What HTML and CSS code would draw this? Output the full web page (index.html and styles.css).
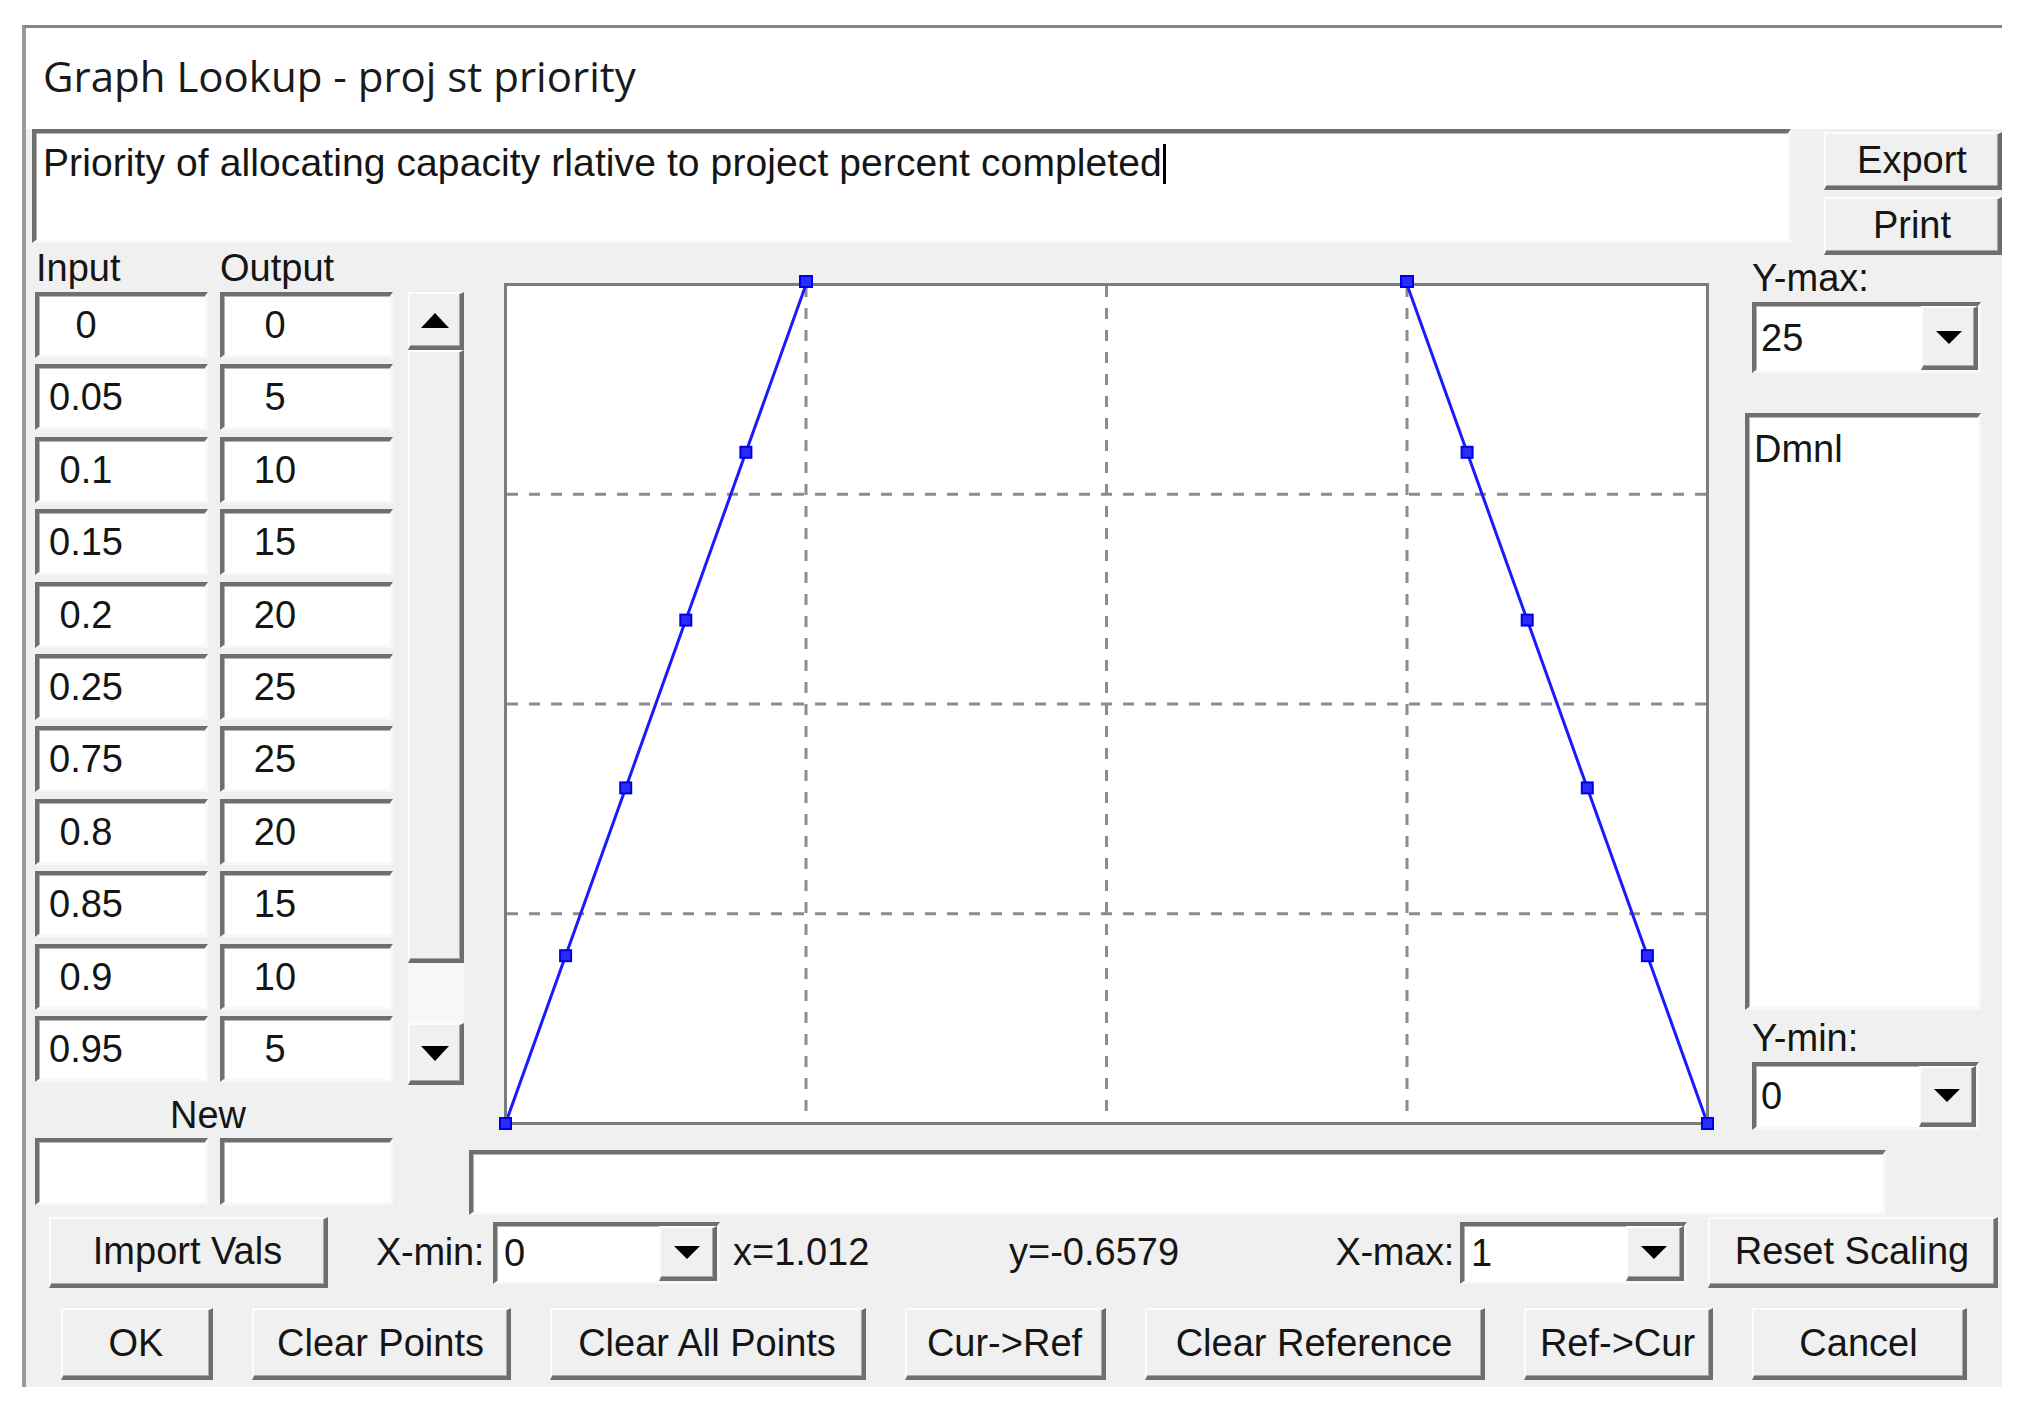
FILE: index.html
```html
<!DOCTYPE html>
<html lang="en">
<head>
    <meta charset="UTF-8">
    <title>Graph Lookup - proj st priority</title>
    <link rel="stylesheet" href="styles.css">
</head>
<body>
<div class="window">
    <div class="titlebar">Graph Lookup - proj st priority</div>
    <div class="client">
        <div class="desc-row">
            <div class="field desc">Priority of allocating capacity rlative to project percent completed<span class="caret"></span></div>
            <div class="side-btns">
                <div class="btn">Export</div>
                <div class="btn">Print</div>
            </div>
        </div>

        <div class="main">
            <div class="table-panel">
                <div class="heads"><span class="head-in">Input</span><span>Output</span></div>
                <div class="table-body">
                    <div class="rows">
                        <div class="row"><div class="field cell in"><span>0</span></div><div class="field cell out"><span>0</span></div></div>
                        <div class="row"><div class="field cell in"><span>0.05</span></div><div class="field cell out"><span>5</span></div></div>
                        <div class="row"><div class="field cell in"><span>0.1</span></div><div class="field cell out"><span>10</span></div></div>
                        <div class="row"><div class="field cell in"><span>0.15</span></div><div class="field cell out"><span>15</span></div></div>
                        <div class="row"><div class="field cell in"><span>0.2</span></div><div class="field cell out"><span>20</span></div></div>
                        <div class="row"><div class="field cell in"><span>0.25</span></div><div class="field cell out"><span>25</span></div></div>
                        <div class="row"><div class="field cell in"><span>0.75</span></div><div class="field cell out"><span>25</span></div></div>
                        <div class="row"><div class="field cell in"><span>0.8</span></div><div class="field cell out"><span>20</span></div></div>
                        <div class="row"><div class="field cell in"><span>0.85</span></div><div class="field cell out"><span>15</span></div></div>
                        <div class="row"><div class="field cell in"><span>0.9</span></div><div class="field cell out"><span>10</span></div></div>
                        <div class="row"><div class="field cell in"><span>0.95</span></div><div class="field cell out"><span>5</span></div></div>
                    </div>
                    <div class="scrollbar">
                        <div class="raised sb-btn up">
                            <svg width="28" height="15" viewBox="0 0 28 15"><polygon class="arrow" points="14,0 28,15 0,15"/></svg>
                        </div>
                        <div class="raised sb-thumb"></div>
                        <div class="sb-track"></div>
                        <div class="raised sb-btn down">
                            <svg width="28" height="15" viewBox="0 0 28 15"><polygon class="arrow" points="0,0 28,0 14,15"/></svg>
                        </div>
                    </div>
                </div>
                <div class="new-label">New</div>
                <div class="row new-row"><div class="field cell in"></div><div class="field cell out"></div></div>
            </div>

            <div class="plot">
                <svg class="graph" width="1205" height="842" viewBox="0 0 1205 842">
                    <line class="grid" x1="302" y1="3" x2="302" y2="839"/>
                    <line class="grid" x1="602.5" y1="3" x2="602.5" y2="839"/>
                    <line class="grid" x1="903" y1="3" x2="903" y2="839"/>
                    <line class="grid" x1="3" y1="211.25" x2="1202" y2="211.25"/>
                    <line class="grid" x1="3" y1="421" x2="1202" y2="421"/>
                    <line class="grid" x1="3" y1="630.75" x2="1202" y2="630.75"/>
                    <polyline class="curve" points="1.5,840.5 61.6,672.7 121.7,504.9 181.8,337.1 241.9,169.3 302,1.5 903,1.5 963.1,169.3 1023.2,337.1 1083.3,504.9 1143.4,672.7 1203.5,840.5"/>
                    <rect class="frame" x="1.5" y="1.5" width="1202" height="839"/>
                    <rect class="pt" x="-4" y="835" width="11" height="11"/>
                    <rect class="pt" x="56.1" y="667.2" width="11" height="11"/>
                    <rect class="pt" x="116.2" y="499.4" width="11" height="11"/>
                    <rect class="pt" x="176.3" y="331.6" width="11" height="11"/>
                    <rect class="pt" x="236.4" y="163.8" width="11" height="11"/>
                    <rect class="pt" x="296" y="-7" width="12" height="11"/>
                    <rect class="pt" x="897" y="-7" width="12" height="11"/>
                    <rect class="pt" x="957.6" y="163.8" width="11" height="11"/>
                    <rect class="pt" x="1017.7" y="331.6" width="11" height="11"/>
                    <rect class="pt" x="1077.8" y="499.4" width="11" height="11"/>
                    <rect class="pt" x="1137.9" y="667.2" width="11" height="11"/>
                    <rect class="pt" x="1198" y="835" width="11" height="11"/>
                </svg>
            </div>

            <div class="scale-panel">
                <div class="scale-label">Y-max:</div>
                <div class="field combo ymax">
                    <span class="val">25</span>
                    <div class="raised drop"><svg width="26" height="13" viewBox="0 0 26 13"><polygon class="arrow" points="0,0 26,0 13,13"/></svg></div>
                </div>
                <div class="field units">Dmnl</div>
                <div class="scale-label min">Y-min:</div>
                <div class="field combo ymin">
                    <span class="val">0</span>
                    <div class="raised drop"><svg width="26" height="13" viewBox="0 0 26 13"><polygon class="arrow" points="0,0 26,0 13,13"/></svg></div>
                </div>
            </div>

            <div class="field comment"></div>
        </div>

        <div class="ctrl-row">
            <div class="btn import">Import Vals</div>
            <div class="lbl lbl-xmin">X-min:</div>
            <div class="field combo xrange">
                <span class="val">0</span>
                <div class="raised drop"><svg width="26" height="13" viewBox="0 0 26 13"><polygon class="arrow" points="0,0 26,0 13,13"/></svg></div>
            </div>
            <div class="readout-x">x=1.012</div>
            <div class="readout-y">y=-0.6579</div>
            <div class="lbl lbl-xmax">X-max:</div>
            <div class="field combo xrange">
                <span class="val">1</span>
                <div class="raised drop"><svg width="26" height="13" viewBox="0 0 26 13"><polygon class="arrow" points="0,0 26,0 13,13"/></svg></div>
            </div>
            <div class="btn reset">Reset Scaling</div>
        </div>

        <div class="btn-row">
            <div class="btn b-ok">OK</div>
            <div class="btn b-clear">Clear Points</div>
            <div class="btn b-clear-all">Clear All Points</div>
            <div class="btn b-cur-ref">Cur-&gt;Ref</div>
            <div class="btn b-clear-ref">Clear Reference</div>
            <div class="btn b-ref-cur">Ref-&gt;Cur</div>
            <div class="btn b-cancel">Cancel</div>
        </div>
    </div>
</div>
</body>
</html>
```

FILE: styles.css
```css
* {
    box-sizing: border-box;
}
body {
    margin: 0;
    background: #fff;
    font-family: "Liberation Sans", Arial, sans-serif;
    font-size: 38px;
    color: #151515;
}
.window {
    margin: 25px 0 0 22px;
    width: 1980px;
    height: 1362px;
    border-left: 4px solid #9a9a9a;
    border-top: 3px solid #858585;
    background: #f0f0f0;
}
.titlebar {
    height: 101px;
    background: #fff;
    padding-left: 17px;
    font-family: "Open Sans", sans-serif;
    font-size: 42px;
    line-height: 96px;
    color: #1a1a1a;
}

/* sunken and raised 3d edges */
.field {
    background: #fff;
    border-top: 4px solid #6f6f6f;
    border-left: 4px solid #6f6f6f;
    border-right: 3px solid #f8f8f8;
    border-bottom: 3px solid #f8f8f8;
    box-shadow: inset 1px 1px 0 #b4b4b4;
}
.raised, .btn {
    background: #f0f0f0;
    border-top: 2px solid #fdfdfd;
    border-left: 2px solid #fdfdfd;
    border-right: 4px solid #6e6e6e;
    border-bottom: 4px solid #6e6e6e;
    box-shadow: inset -1px -1px 0 #a8a8a8;
}
.btn {
    display: flex;
    align-items: center;
    justify-content: center;
    white-space: nowrap;
}
.arrow {
    fill: #000;
}

.desc-row {
    display: flex;
    padding-left: 6px;
}
.desc {
    width: 1759px;
    height: 114px;
    padding: 10px 0 0 7px;
    font-size: 39px;
    line-height: 40px;
    letter-spacing: 0.1px;
    white-space: nowrap;
}
.caret {
    display: inline-block;
    width: 3px;
    height: 40px;
    margin-left: 1px;
    background: #000;
    vertical-align: -8px;
}
.side-btns {
    display: flex;
    flex-direction: column;
    gap: 7px;
    width: 178px;
    margin: 3px 0 0 33px;
}
.side-btns .btn {
    height: 58px;
}

.main {
    display: grid;
    grid-template-columns: 443px 1276px 257px;
    grid-template-rows: 895px 65px;
}

/* lookup table */
.table-panel {
    grid-column: 1;
    grid-row: 1 / 3;
    padding-left: 9px;
}
.heads {
    display: flex;
    height: 37px;
    line-height: 26px;
}
.head-in {
    width: 185px;
    padding-left: 1px;
}
.table-body {
    display: flex;
}
.rows {
    display: flex;
    flex-direction: column;
    gap: 6.4px;
}
.row {
    display: flex;
    gap: 12px;
}
.cell {
    width: 173px;
    height: 66px;
    display: flex;
    align-items: center;
}
.cell span {
    width: 94px;
    text-align: center;
}
.cell.out span {
    width: 102px;
}
.new-row .cell {
    height: 67px;
}
.scrollbar {
    display: flex;
    flex-direction: column;
    width: 56px;
    height: 793px;
    margin-left: 15px;
}
.sb-btn {
    display: flex;
    align-items: center;
    justify-content: center;
    height: 58px;
}
.sb-btn.down {
    height: 62px;
}
.sb-thumb {
    height: 613px;
}
.sb-track {
    height: 60px;
    background: #f7f7f7;
}
.new-label {
    width: 346px;
    padding-top: 7px;
    line-height: 46px;
    text-align: center;
}

/* graph */
.plot {
    grid-column: 2;
    grid-row: 1;
    width: 1205px;
    height: 842px;
    margin: 28px 0 0 35px;
    background: #fff;
}
.graph {
    display: block;
    overflow: visible;
}
.grid {
    stroke: #8c8c8c;
    stroke-width: 3;
    stroke-dasharray: 11 11;
}
.frame {
    fill: none;
    stroke: #7c7c7c;
    stroke-width: 3;
}
.curve {
    fill: none;
    stroke: #1a1aff;
    stroke-width: 3;
}
.pt {
    fill: #2b2bff;
    stroke: #0000e8;
    stroke-width: 2;
}

/* scale panel */
.scale-panel {
    grid-column: 3;
    grid-row: 1;
}
.scale-label {
    padding-left: 7px;
    line-height: 47px;
}
.scale-label.min {
    padding-top: 4px;
    line-height: 48px;
}
.combo {
    display: flex;
}
.combo .val {
    flex: 1;
    align-self: center;
    padding-left: 5px;
}
.combo .drop {
    display: flex;
    align-items: center;
    justify-content: center;
    width: 57px;
}
.ymax {
    width: 229px;
    height: 71px;
    margin-left: 7px;
}
.ymin {
    width: 227px;
    height: 68px;
    margin-left: 7px;
}
.units {
    width: 236px;
    height: 597px;
    margin-top: 40px;
    padding: 10px 0 0 5px;
    line-height: 44px;
}
.comment {
    grid-column: 2 / 4;
    grid-row: 2;
    width: 1417px;
    height: 65px;
}

/* bottom controls */
.ctrl-row {
    display: flex;
    align-items: center;
    height: 71px;
    margin-top: 2px;
    padding-left: 23px;
}
.import {
    width: 279px;
    height: 71px;
}
.lbl {
    display: flex;
    justify-content: flex-end;
    white-space: nowrap;
    letter-spacing: -0.3px;
}
.lbl-xmin {
    width: 165px;
    padding-right: 9px;
}
.lbl-xmax {
    width: 125px;
    padding-right: 6px;
}
.xrange {
    width: 227px;
    height: 62px;
}
.xrange .val {
    padding-left: 7px;
}
.xrange .drop {
    width: 58px;
}
.readout-x {
    width: 289px;
    padding-left: 13px;
}
.readout-y {
    width: 326px;
}
.reset {
    width: 290px;
    height: 71px;
    margin-left: 21px;
}
.btn-row {
    display: flex;
    gap: 39px;
    height: 72px;
    margin-top: 20px;
    padding-left: 35px;
}
.b-ok { width: 152px; }
.b-clear { width: 259px; }
.b-clear-all { width: 316px; }
.b-cur-ref { width: 201px; }
.b-clear-ref { width: 340px; }
.b-ref-cur { width: 189px; }
.b-cancel { width: 215px; }
```
